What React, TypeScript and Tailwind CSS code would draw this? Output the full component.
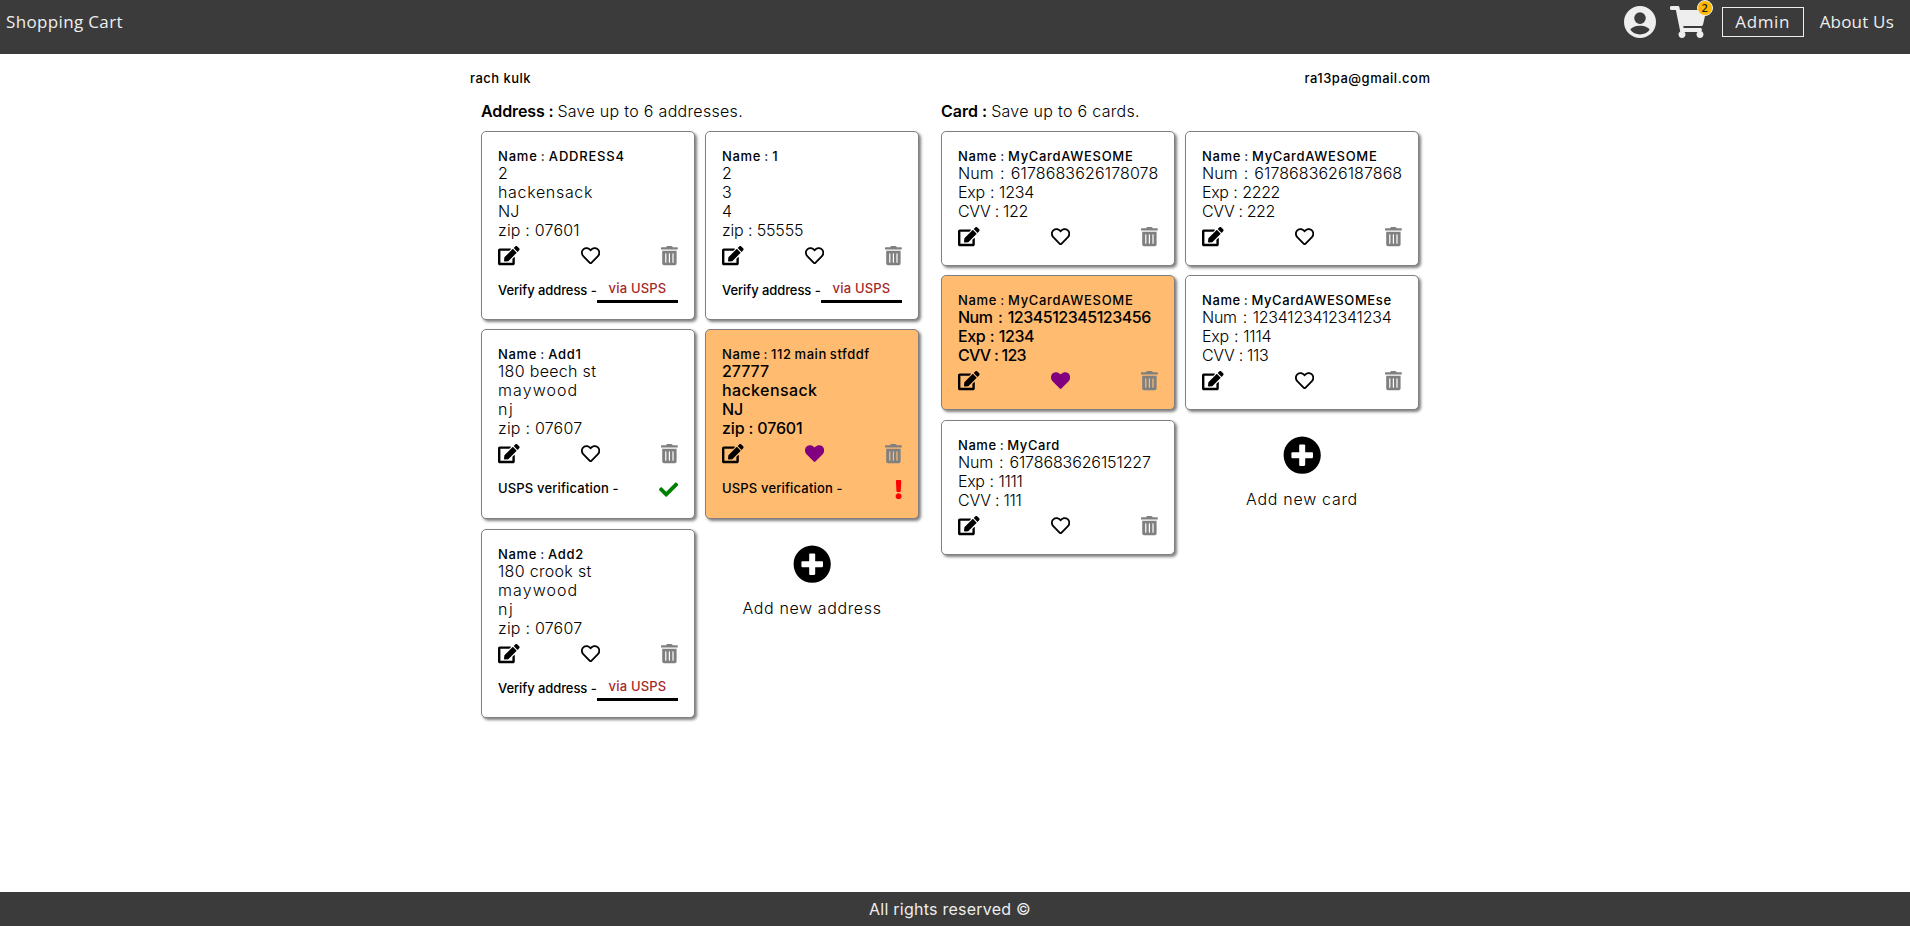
import React from "react";
import {
  FaCheck,
  FaEdit,
  FaExclamation,
  FaHeart,
  FaPlusCircle,
  FaRegHeart,
  FaShoppingCart,
  FaTrashAlt,
} from "react-icons/fa";

type Line = { text: string; track: string };
type Status = "unverified" | "verified" | "failed";
type Entry = { name: Line; lines: Line[]; favorite?: boolean; status?: Status };

const addresses: Entry[] = [
  {
    name: { text: "Name : ADDRESS4", track: "tracking-[0.8px]" },
    lines: [
      { text: "2", track: "" },
      { text: "hackensack", track: "tracking-[0.67px]" },
      { text: "NJ", track: "" },
      { text: "zip : 07601", track: "tracking-[0.2px]" },
    ],
    status: "unverified",
  },
  {
    name: { text: "Name : 1", track: "tracking-[0.7px]" },
    lines: [
      { text: "2", track: "" },
      { text: "3", track: "" },
      { text: "4", track: "" },
      { text: "zip : 55555", track: "tracking-[-0.15px]" },
    ],
    status: "unverified",
  },
  {
    name: { text: "Name : Add1", track: "tracking-[0.7px]" },
    lines: [
      { text: "180 beech st", track: "tracking-[0.31px]" },
      { text: "maywood", track: "tracking-[1.08px]" },
      { text: "nj", track: "tracking-[1.5px]" },
      { text: "zip : 07607", track: "tracking-[0.22px]" },
    ],
    status: "verified",
  },
  {
    name: { text: "Name : 112 main stfddf", track: "tracking-[0.55px]" },
    lines: [
      { text: "27777", track: "tracking-[-0.05px]" },
      { text: "hackensack", track: "tracking-[0.39px]" },
      { text: "NJ", track: "" },
      { text: "zip : 07601", track: "tracking-[-0.16px]" },
    ],
    favorite: true,
    status: "failed",
  },
  {
    name: { text: "Name : Add2", track: "tracking-[0.68px]" },
    lines: [
      { text: "180 crook st", track: "tracking-[0.31px]" },
      { text: "maywood", track: "tracking-[1.08px]" },
      { text: "nj", track: "tracking-[1.5px]" },
      { text: "zip : 07607", track: "tracking-[0.22px]" },
    ],
    status: "unverified",
  },
];

const cards: Entry[] = [
  {
    name: { text: "Name : MyCardAWESOME", track: "tracking-[0.68px]" },
    lines: [
      { text: "Num : 6178683626178078", track: "tracking-[0.14px] [word-spacing:1.4px]" },
      { text: "Exp : 1234", track: "tracking-[-0.24px] [word-spacing:0.7px]" },
      { text: "CVV : 122", track: "tracking-[-0.32px]" },
    ],
  },
  {
    name: { text: "Name : MyCardAWESOME", track: "tracking-[0.68px]" },
    lines: [
      { text: "Num : 6178683626187868", track: "tracking-[0.08px] [word-spacing:1.4px]" },
      { text: "Exp : 2222", track: "tracking-[-0.38px] [word-spacing:0.7px]" },
      { text: "CVV : 222", track: "tracking-[-0.39px]" },
    ],
  },
  {
    name: { text: "Name : MyCardAWESOME", track: "tracking-[0.68px]" },
    lines: [
      { text: "Num : 1234512345123456", track: "tracking-[-0.48px] [word-spacing:1.6px]" },
      { text: "Exp : 1234", track: "tracking-[-0.42px] [word-spacing:0.7px]" },
      { text: "CVV : 123", track: "tracking-[-0.75px]" },
    ],
    favorite: true,
  },
  {
    name: { text: "Name : MyCardAWESOMEse", track: "tracking-[0.6px]" },
    lines: [
      { text: "Num : 1234123412341234", track: "tracking-[-0.25px] [word-spacing:1.6px]" },
      { text: "Exp : 1114", track: "tracking-[-0.22px] [word-spacing:0.7px]" },
      { text: "CVV : 113", track: "tracking-[-0.32px]" },
    ],
  },
  {
    name: { text: "Name : MyCard", track: "tracking-[0.58px]" },
    lines: [
      { text: "Num : 6178683626151227", track: "tracking-[-0.11px] [word-spacing:1.5px]" },
      { text: "Exp : 1111", track: "tracking-[-0.33px] [word-spacing:0.7px]" },
      { text: "CVV : 111", track: "tracking-[-0.26px]" },
    ],
  },
];

function UserIcon() {
  return (
    <svg viewBox="0 0 32 32" className="size-8 fill-current">
      <path
        fillRule="evenodd"
        d="M16 0a16 16 0 1 1 0 32a16 16 0 0 1 0-32zM16 6.3a5.8 5.8 0 1 0 0 11.6a5.8 5.8 0 0 0 0-11.6zM16 19.7c-4.2 0-8.4 1.5-9.6 4c2 2.900 5.500 4.700 9.600 4.700s7.600-1.800 9.600-4.700c-1.200-2.500-5.400-4-9.600-4z"
      />
    </svg>
  );
}

function Header() {
  return (
    <header className="flex h-[54px] items-start bg-[#3b3b3b] font-['Open_Sans',sans-serif] text-[17px] leading-[23px] text-[#eeeeee]">
      <div className="pt-[10px] pl-[6px] tracking-[0.35px]">Shopping Cart</div>
      <nav className="ml-auto flex items-start pr-4">
        <span className="pt-[6px]">
          <UserIcon />
        </span>
        <span className="relative ml-[14px] pt-[6px]">
          <FaShoppingCart className="h-8 w-9" />
          <span className="absolute top-0 left-[27px] h-4 w-4 rounded-full border border-[#eeeeee] bg-[#ffb700] text-center text-[11px] leading-[14px] font-semibold text-[#222222]">
            2
          </span>
        </span>
        <span className="mt-[7px] ml-4 flex h-[30px] w-[82px] justify-center border border-[#eeeeee] pt-[2px] tracking-[0.6px]">
          Admin
        </span>
        <span className="mt-[10px] ml-4 tracking-[0.2px]">About Us</span>
      </nav>
    </header>
  );
}

function Verification({ status }: { status: Status }) {
  if (status === "unverified") {
    return (
      <div className="mt-[12px] flex text-[13px] leading-4 font-medium">
        <span className="mt-[4px] w-[99px] whitespace-nowrap tracking-[-0.08px]">Verify address -</span>
        <span className="h-[25px] w-[81px] border-b-[3px] border-black pt-[2px] text-center tracking-[0.19px] text-[#a52a2a]">
          via USPS
        </span>
      </div>
    );
  }
  return (
    <div className="mt-[15px] flex items-start justify-between text-[13px] leading-4 font-medium">
      <span className="mt-px tracking-[0.16px]">USPS verification -</span>
      {status === "verified" ? (
        <FaCheck className="mt-[0.5px] size-[19.2px] text-[#008000]" />
      ) : (
        <FaExclamation className="mt-[0.5px] h-[19.2px] w-[7.2px] text-[#ff0000]" />
      )}
    </div>
  );
}

function EntryCard({ entry, size }: { entry: Entry; size: string }) {
  const tone = entry.favorite ? "bg-[#ffbb70]" : "bg-white";
  const weight = entry.favorite ? "font-medium" : "font-light";
  return (
    <article
      className={`${size} ${tone} rounded-[5px] border border-[#808080] p-4 shadow-[2px_2px_3px_#808080]`}
    >
      <h3
        className={`text-[13px] leading-4 font-medium whitespace-nowrap [word-spacing:-1px] ${entry.name.track}`}
      >
        {entry.name.text}
      </h3>
      {entry.lines.map((line, i) => (
        <p key={i} className={`text-base leading-[19px] whitespace-nowrap ${weight} ${line.track}`}>
          {line.text}
        </p>
      ))}
      <div className="flex h-[26px] justify-between pt-[6.4px]">
        <FaEdit className="h-[19.2px] w-[21.6px]" />
        {entry.favorite ? (
          <FaHeart className="size-[19.2px] text-[#800080]" />
        ) : (
          <FaRegHeart className="size-[19.2px]" />
        )}
        <FaTrashAlt className="h-[19.2px] w-[16.8px] text-[#808080]" />
      </div>
      {entry.status && <Verification status={entry.status} />}
    </article>
  );
}

function AddNew({ label, track }: { label: string; track: string }) {
  return (
    <div className="flex flex-col items-center pt-[15.6px]">
      <FaPlusCircle className="size-[38.4px]" />
      <span className={`mt-[15px] text-base leading-5 font-light ${track}`}>{label}</span>
    </div>
  );
}

export default function App() {
  return (
    <div className="flex h-[926px] flex-col overflow-hidden bg-white font-['Inter',sans-serif] text-black">
      <Header />
      <main className="mx-auto w-[960px] flex-1">
        <div className="mt-[16px] flex justify-between text-[13px] leading-4 font-medium">
          <span className="ml-[-5px] tracking-[0.48px]">rach kulk</span>
          <span className="mr-[4.5px] tracking-[0.5px]">ra13pa@gmail.com</span>
        </div>
        <div className="mt-[15px] flex pl-[6px]">
          <section className="w-[460px]">
            <h2 className="text-base leading-5">
              <span className="font-semibold tracking-[-0.12px]">Address : </span>
              <span className="font-light tracking-[0.3px]">Save up to 6 addresses.</span>
            </h2>
            <div className="mt-[10px] grid grid-cols-[224px_214px] grid-rows-[198px_200px_189px] items-start">
              {addresses.map((entry, i) => (
                <EntryCard
                  key={i}
                  entry={entry}
                  size={entry.status === "unverified" ? "h-[189px] w-[214px]" : "h-[190px] w-[214px]"}
                />
              ))}
              <AddNew label="Add new address" track="tracking-[0.62px]" />
            </div>
          </section>
          <section>
            <h2 className="text-base leading-5">
              <span className="font-semibold">Card : </span>
              <span className="font-light tracking-[0.3px]">Save up to 6 cards.</span>
            </h2>
            <div className="mt-[10px] grid grid-cols-[244px_234px] grid-rows-[144px_145px_135px] items-start">
              {cards.map((entry, i) => (
                <EntryCard key={i} entry={entry} size="h-[135px] w-[234px]" />
              ))}
              <AddNew label="Add new card" track="tracking-[0.7px]" />
            </div>
          </section>
        </div>
      </main>
      <footer className="h-[34px] bg-[#3b3b3b] pt-[7px] pr-[10px] text-center text-base leading-5 tracking-[0.24px] text-[#eeeeee]">
        All rights reserved ©
      </footer>
    </div>
  );
}
